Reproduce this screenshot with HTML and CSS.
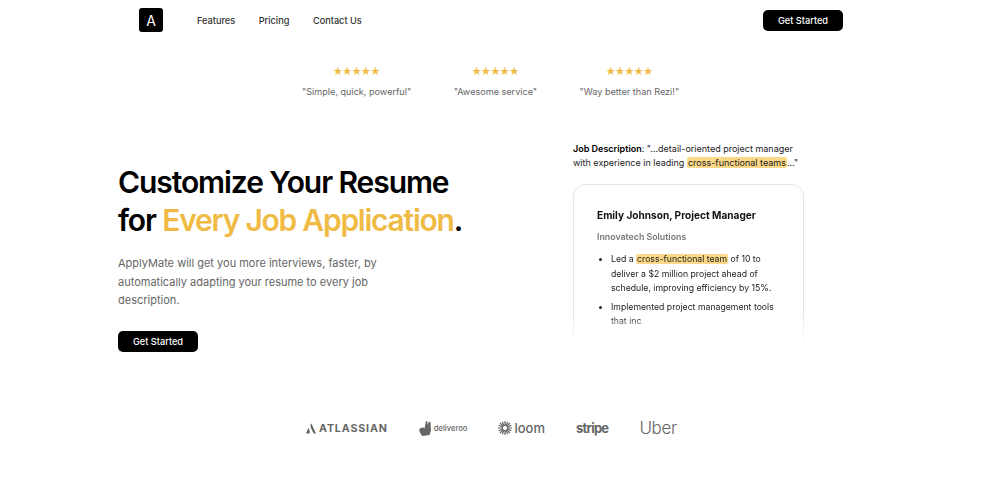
FILE: index.html
```html
<!DOCTYPE html>
<html lang="en">

<head>
  <meta charset="UTF-8">
  <meta name="viewport" content="width=device-width, initial-scale=1.0">
  <title>ApplyMate</title>
  <link rel="stylesheet" href="styles.css">
</head>

<body>
  <nav class="nav">
    <div class="nav-logo">A</div>
    <div class="nav-links">
      <a>Features</a>
      <a>Pricing</a>
      <a>Contact Us</a>
    </div>
    <button class="btn">Get Started</button>
  </nav>

  <section class="reviews">
    <div class="review">
      <div class="stars">★★★★★</div>
      <p>"Simple, quick, powerful"</p>
    </div>
    <div class="review">
      <div class="stars">★★★★★</div>
      <p>"Awesome service"</p>
    </div>
    <div class="review">
      <div class="stars">★★★★★</div>
      <p>"Way better than Rezi!"</p>
    </div>
  </section>

  <section class="hero">
    <div class="hero-left">
      <h1>Customize Your Resume<br>for <span class="accent">Every Job Application</span>.</h1>
      <p class="lead">ApplyMate will get you more interviews, faster, by automatically adapting your resume to every job description.</p>
      <button class="btn">Get Started</button>
    </div>
    <div class="hero-right">
      <p class="job"><b>Job Description</b>: "...detail-oriented project manager with experience in leading <mark>cross-functional teams</mark>..."</p>
      <div class="resume">
        <h3>Emily Johnson, Project Manager</h3>
        <h4>Innovatech Solutions</h4>
        <ul>
          <li>Led a <mark>cross-functional team</mark> of 10 to deliver a $2 million project ahead of schedule, improving efficiency by 15%.</li>
          <li>Implemented project management tools that inc</li>
        </ul>
      </div>
    </div>
  </section>

  <section class="logos">
    <div class="logo logo-atlassian">
      <svg width="10" height="11" viewBox="0 0 11 11"><path d="M5.5 0C4.6 1.8 4.7 3.4 5.6 5.2L8.4 11H11L6 .3C5.8 0 5.6 0 5.5 0ZM2.9 5.2C2.7 5 2.5 5 2.4 5.3L0 11H3.9C4.5 9.2 4 7 2.9 5.2Z" fill="#666"/></svg>
      <span>ATLASSIAN</span>
    </div>
    <div class="logo logo-deliveroo">
      <svg width="12" height="15" viewBox="0 0 12 15"><path d="M7 0L8.5 .4 8.2 4 10 .8 11.5 1.2 12 9.5 10.5 14 3 15 1.5 12.5 0 9 1.5 7 4.5 6.5 5.5 7.5Z" fill="#666"/></svg>
      <span>deliveroo</span>
    </div>
    <div class="logo logo-loom">
      <svg width="14" height="14" viewBox="0 0 15 15">
        <path d="M7.5 0V15M0 7.5H15M2.2 2.2L12.8 12.8M12.8 2.2L2.2 12.8M4.6 .7L10.4 14.3M10.4 .7L4.6 14.3M.7 4.6L14.3 10.4M.7 10.4L14.3 4.6" stroke="#666" stroke-width="1.3"/>
        <circle cx="7.5" cy="7.5" r="2.3" fill="#fff"/>
      </svg>
      <span>loom</span>
    </div>
    <div class="logo logo-stripe"><span>stripe</span></div>
    <div class="logo logo-uber"><span>Uber</span></div>
  </section>
</body>

</html>
```

FILE: styles.css
```css
body {
  margin: 0;
  font-family: Inter, 'Liberation Sans', sans-serif;
  color: #111;
  background: #fff;
}

p,
h1,
h3,
h4,
ul {
  margin: 0;
  padding: 0;
}

.btn {
  width: 80px;
  height: 21px;
  padding: 0;
  border: 0;
  border-radius: 5px;
  background: #000;
  color: #fff;
  font-family: inherit;
  font-size: 9.2px;
  font-weight: 500;
}

.nav {
  display: flex;
  align-items: center;
  height: 40px;
  padding: 0 157px 0 139px;
}

.nav-logo {
  display: flex;
  align-items: center;
  justify-content: center;
  width: 24px;
  height: 24px;
  border-radius: 3px;
  background: #000;
  color: #fff;
  font-size: 14px;
}

.nav-links {
  display: flex;
  gap: 23.5px;
  margin-left: 34px;
  font-size: 9.2px;
  font-weight: 500;
  color: #333;
}

.nav .btn {
  margin-left: auto;
}

.reviews {
  display: flex;
  gap: 42.5px;
  margin-top: 23px;
  padding-left: 302px;
  font-size: 9.1px;
  color: #666;
  text-align: center;
}

.stars {
  color: #f0bb45;
  font-family: 'Noto Sans CJK SC', 'DejaVu Sans', sans-serif;
  font-size: 9.4px;
  line-height: 14px;
}

.review p {
  margin-top: 8px;
  line-height: 14px;
}

.hero {
  display: flex;
  justify-content: space-between;
  margin-top: 43px;
  padding: 0 196px 0 118px;
}

.hero-left {
  padding-top: 21px;
}

h1 {
  font-size: 30px;
  font-weight: 600;
  line-height: 38px;
  letter-spacing: -1.08px;
  color: #000;
}

.accent {
  color: #f0bb45;
  letter-spacing: -1.25px;
}

.lead {
  width: 270px;
  margin-top: 15px;
  font-size: 11px;
  line-height: 18.7px;
  color: #666;
}

.hero-left .btn {
  margin-top: 21px;
}

.hero-right {
  width: 231px;
}

.job {
  font-size: 9px;
  line-height: 14px;
  color: #222;
}

.job b {
  font-weight: 600;
  color: #000;
}

mark {
  padding: 0 1px;
  border-radius: 2px;
  background: #fbd988;
  color: #222;
}

.resume {
  height: 162px;
  margin-top: 14px;
  padding: 23px 23px 0;
  box-sizing: border-box;
  overflow: hidden;
  border: 1px solid #e6e6e6;
  border-bottom: 0;
  border-radius: 12px 12px 0 0;
  -webkit-mask-image: linear-gradient(#000 80%, transparent);
  mask-image: linear-gradient(#000 80%, transparent);
}

.resume h3 {
  font-size: 10.1px;
  font-weight: 700;
  line-height: 14px;
}

.resume h4 {
  margin-top: 9px;
  font-size: 8.8px;
  font-weight: 600;
  line-height: 12px;
  color: #777;
}

.resume ul {
  margin-top: 9px;
  padding-left: 14px;
  font-size: 8.7px;
  line-height: 14.6px;
  color: #222;
}

.resume li + li {
  margin-top: 4px;
}

.logos {
  display: flex;
  align-items: center;
  gap: 31px;
  margin-top: 64px;
  padding-left: 306px;
  color: #666;
}

.logo {
  display: flex;
  align-items: center;
  height: 24px;
}

.logo-atlassian {
  gap: 3px;
  font-size: 10.7px;
  font-weight: 700;
  letter-spacing: .85px;
}

.logo-deliveroo {
  gap: 3px;
  font-size: 7.6px;
  font-weight: 500;
}

.logo-loom {
  gap: 2px;
  font-size: 13px;
  font-weight: 500;
}

.logo-stripe {
  font-size: 13px;
  font-weight: 700;
  letter-spacing: -.75px;
}

.logo-uber {
  font-size: 17px;
  font-weight: 300;
  letter-spacing: -.3px;
}
```
